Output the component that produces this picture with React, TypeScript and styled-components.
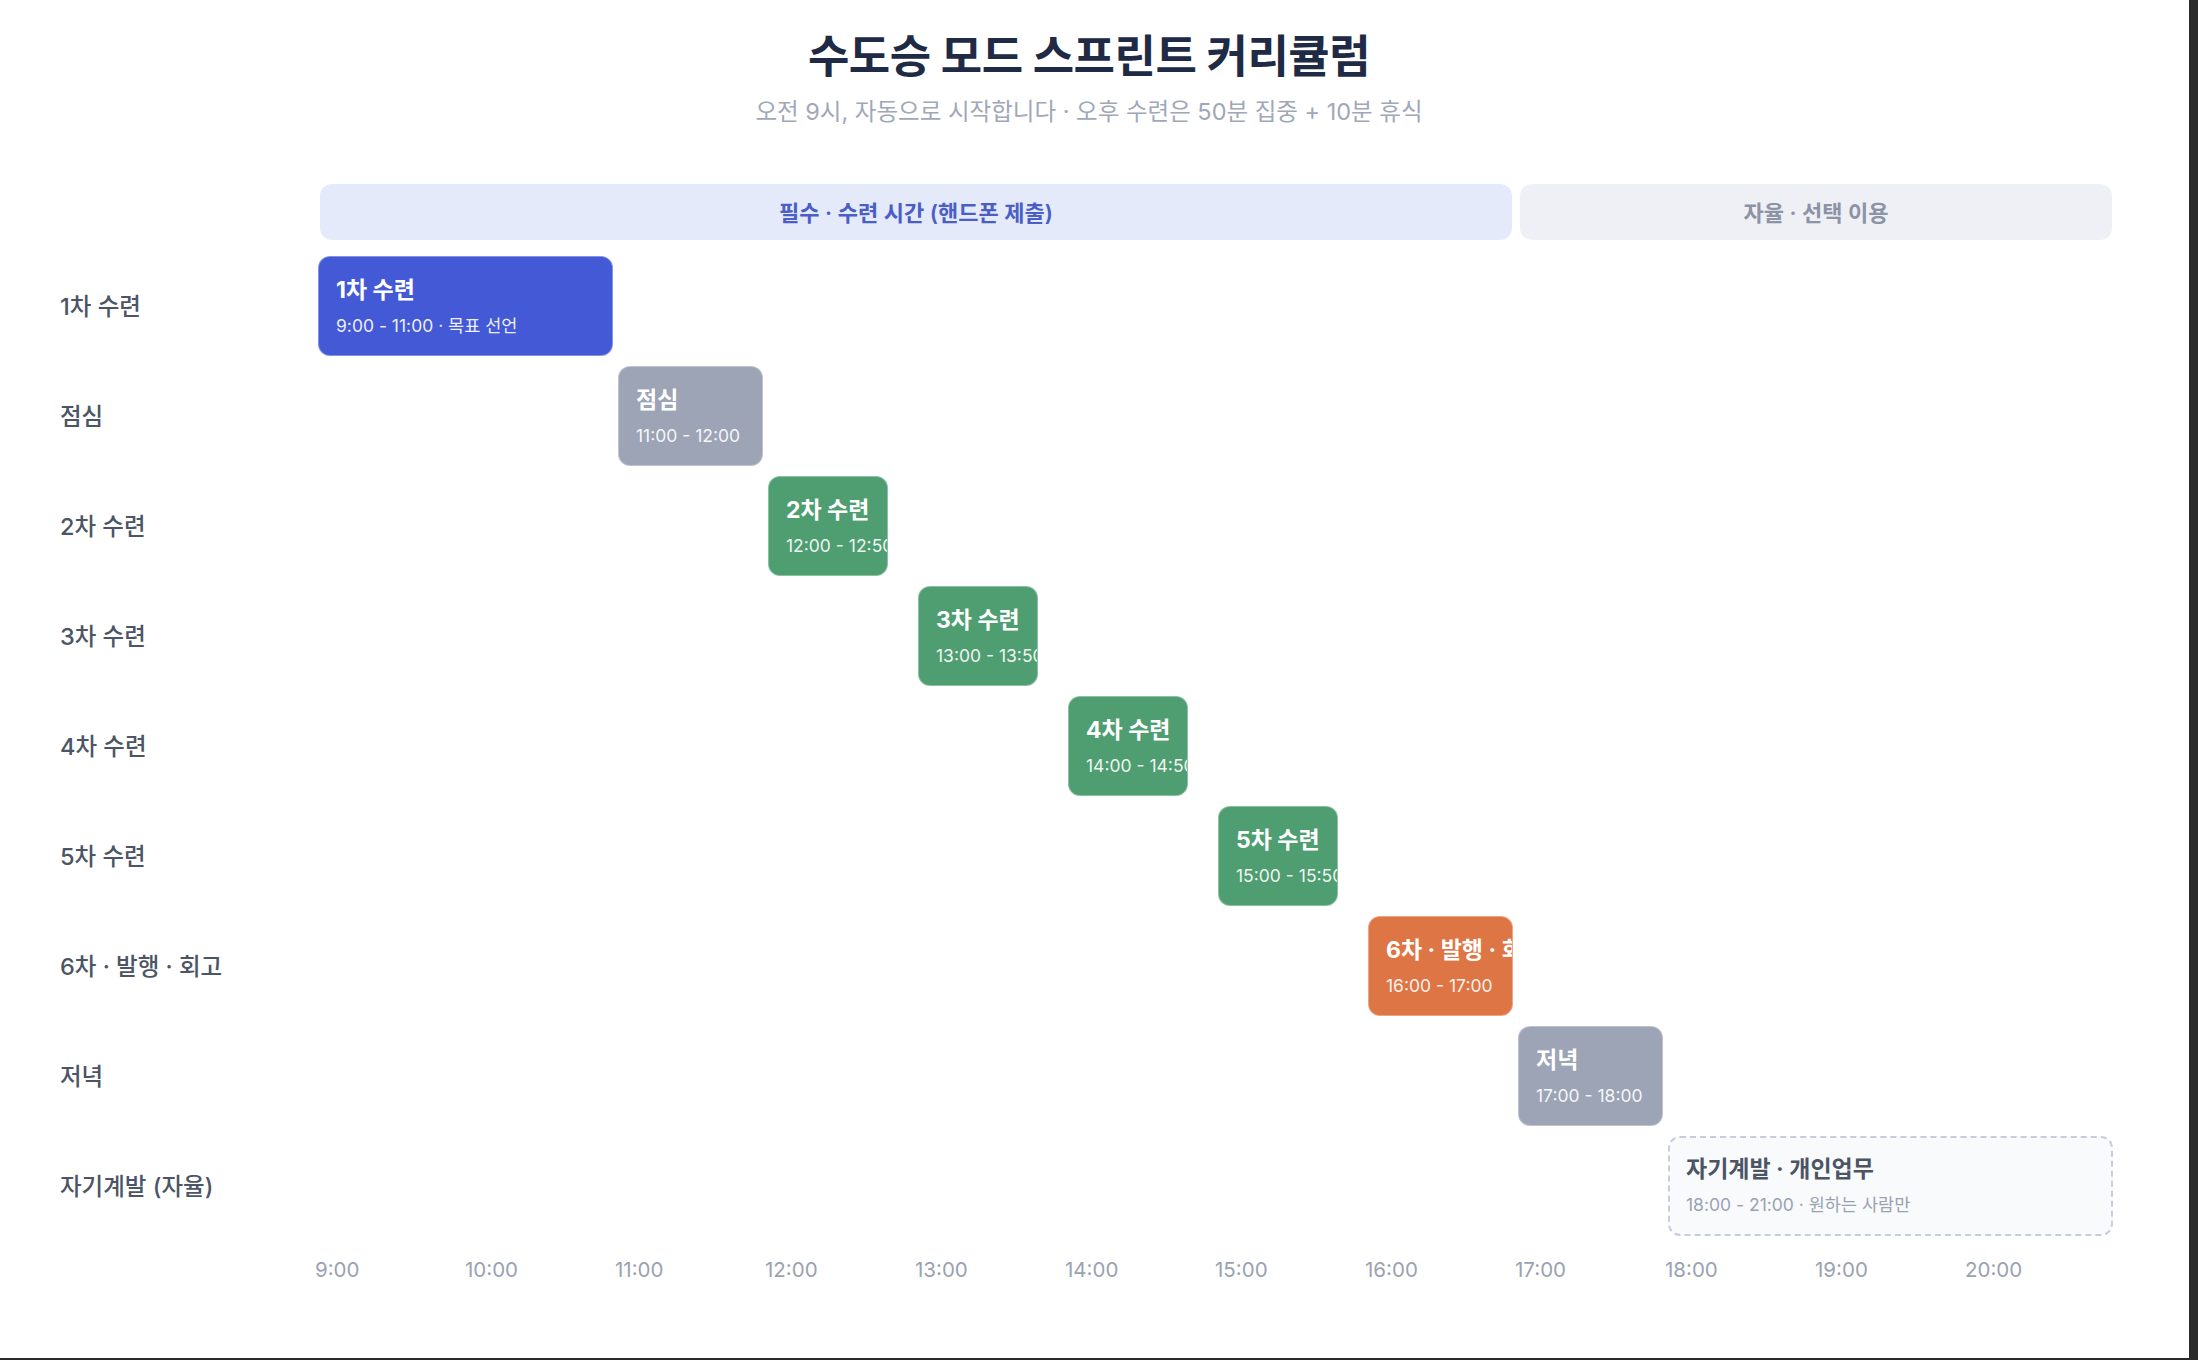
import * as React from 'react'
import styled, { createGlobalStyle } from 'styled-components'

interface ISession {
	label: string
	title: string
	time: string
	start: number // in 10-minute slots from 9:00
	span: number
	kind: 'focus' | 'rest' | 'deep' | 'ship' | 'free'
}

interface IBlockProps {
	kind: ISession['kind']
	start: number
	span: number
}

interface IBandProps {
	muted?: boolean
	start: number
	span: number
}

const SLOT = 25 // px per 10 minutes
const FONT = `Inter, "Noto Sans CJK KR", "Noto Sans", sans-serif`

const palette = {
	focus: '#4359d6',
	rest: '#9ca4b6',
	deep: '#4f9e72',
	ship: '#de7545',
	free: '#f9fafc',
}

const sessions: ISession[] = [
	{ label: '1차 수련', title: '1차 수련', time: '9:00 - 11:00 · 목표 선언', start: 0, span: 12, kind: 'focus' },
	{ label: '점심', title: '점심', time: '11:00 - 12:00', start: 12, span: 6, kind: 'rest' },
	{ label: '2차 수련', title: '2차 수련', time: '12:00 - 12:50', start: 18, span: 5, kind: 'deep' },
	{ label: '3차 수련', title: '3차 수련', time: '13:00 - 13:50', start: 24, span: 5, kind: 'deep' },
	{ label: '4차 수련', title: '4차 수련', time: '14:00 - 14:50', start: 30, span: 5, kind: 'deep' },
	{ label: '5차 수련', title: '5차 수련', time: '15:00 - 15:50', start: 36, span: 5, kind: 'deep' },
	{ label: '6차 · 발행 · 회고', title: '6차 · 발행 · 회고', time: '16:00 - 17:00', start: 42, span: 6, kind: 'ship' },
	{ label: '저녁', title: '저녁', time: '17:00 - 18:00', start: 48, span: 6, kind: 'rest' },
	{ label: '자기계발 (자율)', title: '자기계발 · 개인업무', time: '18:00 - 21:00 · 원하는 사람만', start: 54, span: 18, kind: 'free' },
]

const hours = ['9:00', '10:00', '11:00', '12:00', '13:00', '14:00', '15:00', '16:00', '17:00', '18:00', '19:00', '20:00']

const GlobalStyle = createGlobalStyle`
	html, body {
		margin: 0;
		padding: 0;
		background: #2b2b2b;
	}
	* {
		box-sizing: border-box;
	}
`

const Frame = styled.div`
	width: 2189px;
	height: 1358px;
	background: #ffffff;
	font-family: ${FONT};
	padding: 30px 0 0 60px;
	overflow: hidden;
`

const Content = styled.div`
	width: 2058px;
	display: flex;
	flex-direction: column;
`

const Header = styled.header`
	display: flex;
	flex-direction: column;
	align-items: center;
	margin-bottom: 56px;
`

const Title = styled.h1`
	margin: 0;
	font-size: 45px;
	line-height: 54px;
	font-weight: 700;
	color: #1f2a44;
	letter-spacing: -0.5px;
`

const Subtitle = styled.p`
	margin: 12px 0 0;
	font-size: 23.5px;
	line-height: 32px;
	font-weight: 400;
	color: #a0a8b8;
`

const Chart = styled.div`
	display: grid;
	grid-template-columns: 258px ${SLOT * 72}px;
	row-gap: 10px;
`

const Spacer = styled.div``

const Track = styled.div`
	display: grid;
	grid-template-columns: repeat(72, ${SLOT}px);
	height: 100px;
`

const BandTrack = styled(Track)`
	height: 56px;
	margin-bottom: 6px;
`

const Band = styled.div<IBandProps>`
	grid-column: ${p => p.start + 1} / span ${p => p.span};
	margin: 0 6px 0 2px;
	padding-bottom: 3px;
	border-radius: 12px;
	background: ${p => (p.muted ? '#eef0f5' : '#e4eafa')};
	color: ${p => (p.muted ? '#8b93a5' : '#4a5ec6')};
	display: flex;
	align-items: center;
	justify-content: center;
	font-size: 22px;
	font-weight: 600;
`

const RowLabel = styled.div`
	display: flex;
	align-items: center;
	height: 100px;
	padding-bottom: 3px;
	font-size: 23.5px;
	font-weight: 500;
	color: #4b5565;
	white-space: nowrap;
`

const Block = styled.div<IBlockProps>`
	grid-column: ${p => p.start + 1} / span ${p => p.span};
	margin-right: 5px;
	border-radius: 12px;
	overflow: hidden;
	white-space: nowrap;
	background: ${p => palette[p.kind]};
	border: ${p => (p.kind === 'free' ? '2px dashed #c8cdd9' : '1px solid rgba(255, 255, 255, 0.35)')};
	color: ${p => (p.kind === 'free' ? '#4b5565' : '#ffffff')};
	padding: ${p => (p.kind === 'free' ? '16px 0 0 16px' : '18px 0 0 17px')};
`

const BlockTitle = styled.div`
	font-size: 23px;
	line-height: 30px;
	font-weight: 700;
`

const BlockTime = styled.div<{ free?: boolean }>`
	margin-top: 8px;
	font-size: 17.5px;
	line-height: 25px;
	font-weight: 400;
	color: ${p => (p.free ? '#9aa2b2' : 'rgba(255, 255, 255, 0.92)')};
`

const Axis = styled.div`
	display: grid;
	grid-template-columns: repeat(12, 150px);
	margin-top: 10px;
`

const Tick = styled.div`
	margin-left: -3px;
	font-size: 20.5px;
	line-height: 28px;
	color: #9aa2b2;
`

export default function App() {
	return (
		<>
			<GlobalStyle />
			<Frame>
				<Content>
					<Header>
						<Title>수도승 모드 스프린트 커리큘럼</Title>
						<Subtitle>오전 9시, 자동으로 시작합니다 · 오후 수련은 50분 집중 + 10분 휴식</Subtitle>
					</Header>
					<Chart>
						<Spacer />
						<BandTrack>
							<Band start={0} span={48}>필수 · 수련 시간 (핸드폰 제출)</Band>
							<Band muted start={48} span={24}>자율 · 선택 이용</Band>
						</BandTrack>
						{sessions.map(s => (
							<React.Fragment key={s.label}>
								<RowLabel>{s.label}</RowLabel>
								<Track>
									<Block kind={s.kind} start={s.start} span={s.span}>
										<BlockTitle>{s.title}</BlockTitle>
										<BlockTime free={s.kind === 'free'}>{s.time}</BlockTime>
									</Block>
								</Track>
							</React.Fragment>
						))}
						<Spacer />
						<Axis>
							{hours.map(h => (
								<Tick key={h}>{h}</Tick>
							))}
						</Axis>
					</Chart>
				</Content>
			</Frame>
		</>
	)
}
